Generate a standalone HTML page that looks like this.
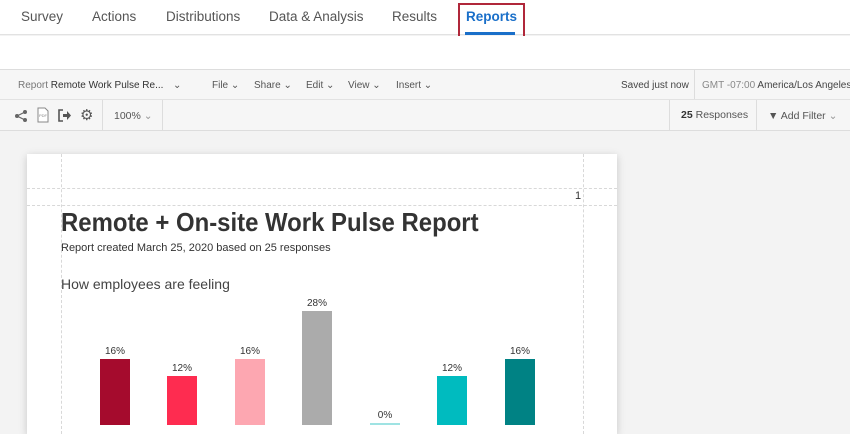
<!DOCTYPE html>
<html><head><style>
*{margin:0;padding:0;box-sizing:border-box}
body{width:850px;height:425px;overflow:hidden;background:#f3f3f3;font-family:"Liberation Sans",sans-serif;position:relative}
.abs{position:absolute}
span{white-space:nowrap}
.nav{top:0;left:0;width:850px;height:35px;background:#fff;border-bottom:1px solid #e2e2e2}
.nav span{position:absolute;top:9px;font-size:13.5px;color:#555}
.band{top:36px;left:0;width:850px;height:34px;background:#fff}
.tb1{top:69px;left:0;width:850px;height:31px;background:#f6f6f6;border-top:1px solid #ddd;border-bottom:1px solid #e2e2e2;font-size:10px;color:#555}
.tb1 span{position:absolute;top:10px}
.tb2{top:100px;left:0;width:850px;height:31px;background:#f6f6f6;border-bottom:1px solid #ddd;font-size:10.5px;color:#555}
.tb2 span{position:absolute}
.vl{position:absolute;top:0;width:1px;height:100%;background:#ddd}
.page{top:154px;left:27px;width:590px;height:280px;background:#fff;box-shadow:0 2px 8px rgba(0,0,0,.18)}
.dv{position:absolute;width:0;border-left:1px dashed #d8d8d8}
.dh{position:absolute;height:0;border-top:1px dashed #d8d8d8}
.bar{position:absolute;width:30px;bottom:0}
.lbl{position:absolute;font-size:10px;color:#333;width:40px;text-align:center}
</style></head><body>
<div class="abs nav">
<span style="left:21px">Survey</span>
<span style="left:92px">Actions</span>
<span style="left:166px">Distributions</span>
<span style="left:269px">Data &amp; Analysis</span>
<span style="left:392px">Results</span>
<span style="left:466px;color:#1a6fc9;font-weight:bold">Reports</span>
<div class="abs" style="left:465px;top:32px;width:50px;height:3px;background:#1a6fc9"></div>
<div class="abs" style="left:458px;top:3px;width:67px;height:35px;border:2px solid #b0273a"></div>
</div>
<div class="abs band"></div>
<div class="abs tb1">
<span style="left:18px;color:#777">Report <span style="position:static;color:#333">Remote Work Pulse Re...</span></span>
<span style="left:173px">⌄</span>
<span style="left:212px">File ⌄</span>
<span style="left:254px">Share ⌄</span>
<span style="left:306px">Edit ⌄</span>
<span style="left:348px">View ⌄</span>
<span style="left:396px">Insert ⌄</span>
<span style="left:621px;color:#444">Saved just now</span>
<div class="vl" style="left:694px"></div>
<span style="left:702px;color:#888">GMT -07:00 <span style="position:static;color:#444">America/Los Angeles</span></span>
</div>
<div class="abs tb2">
<svg class="abs" style="left:14px;top:9px" width="14" height="14" viewBox="0 0 14 14"><circle cx="3" cy="7" r="2" fill="#666"/><circle cx="11" cy="3" r="2" fill="#666"/><circle cx="11" cy="11" r="2" fill="#666"/><path d="M3 7L11 3M3 7L11 11" stroke="#666" stroke-width="1.2"/></svg>
<svg class="abs" style="left:37px;top:7px" width="12" height="16" viewBox="0 0 12 16"><path d="M1 1H8L11 4V15H1Z" fill="#fff" stroke="#888"/><text x="2" y="10" font-size="4" fill="#888" font-family="Liberation Sans">PDF</text></svg>
<svg class="abs" style="left:58px;top:9px" width="14" height="13" viewBox="0 0 14 13"><path d="M5 1H1V12H5" stroke="#555" stroke-width="1.6" fill="none"/><path d="M5 5H9V2L13 6.5L9 11V8H5Z" fill="#555"/></svg>
<span style="left:80px;top:6px;font-size:15px;color:#555">⚙</span>
<div class="vl" style="left:102px"></div>
<span style="left:114px;top:10px">100% <span style="position:static;color:#999">⌄</span></span>
<div class="vl" style="left:162px"></div>
<div class="vl" style="left:669px"></div>
<span style="left:681px;top:9px"><b style="color:#333">25</b> Responses</span>
<div class="vl" style="left:756px"></div>
<span style="left:768px;top:10px">▼ Add Filter <span style="position:static;color:#999">⌄</span></span>
</div>
<div class="abs page">
<div class="dv" style="left:34px;top:0;height:280px"></div>
<div class="dv" style="left:556px;top:0;height:280px"></div>
<div class="dh" style="left:0;top:34px;width:590px"></div>
<div class="dh" style="left:0;top:51px;width:590px"></div>
<div class="abs" style="left:548px;top:36px;font-size:11px;color:#333">1</div>
<div class="abs" style="left:34px;top:53px;font-size:26px;font-weight:bold;color:#333;white-space:nowrap;transform:scaleX(0.92);transform-origin:0 0">Remote + On-site Work Pulse Report</div>
<div class="abs" style="left:34px;top:88px;font-size:11px;color:#333;white-space:nowrap">Report created March 25, 2020 based on 25 responses</div>
<div class="abs" style="left:34px;top:122px;font-size:14px;color:#444;white-space:nowrap">How employees are feeling</div>
</div>
<div class="abs" style="left:0;top:0;width:850px;height:425px;pointer-events:none">
<div class="bar" style="left:100px;top:359px;background:#a50b2d"></div>
<div class="bar" style="left:167px;top:376px;background:#fe2c50"></div>
<div class="bar" style="left:235px;top:359px;background:#fda7b1"></div>
<div class="bar" style="left:302px;top:311px;background:#ababab"></div>
<div class="bar" style="left:370px;top:423px;background:#9fe3e3"></div>
<div class="bar" style="left:437px;top:376px;background:#00bbbf"></div>
<div class="bar" style="left:505px;top:359px;background:#008284"></div>
<div class="lbl" style="left:95px;top:346px">16%</div>
<div class="lbl" style="left:162px;top:363px">12%</div>
<div class="lbl" style="left:230px;top:346px">16%</div>
<div class="lbl" style="left:297px;top:298px">28%</div>
<div class="lbl" style="left:365px;top:410px">0%</div>
<div class="lbl" style="left:432px;top:363px">12%</div>
<div class="lbl" style="left:500px;top:346px">16%</div>
</div>
</body></html>
